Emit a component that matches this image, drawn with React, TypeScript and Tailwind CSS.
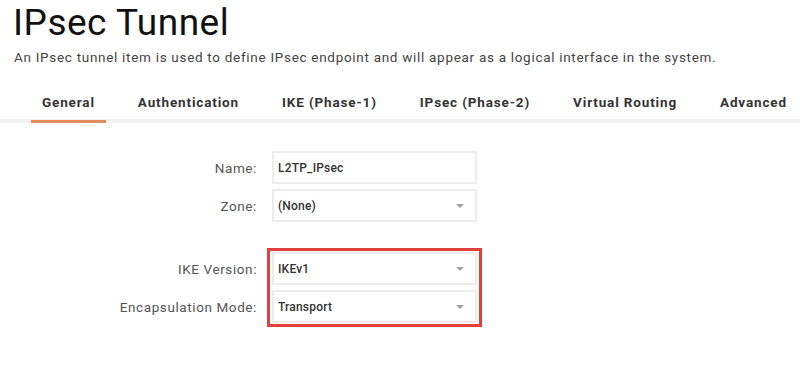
import * as React from "react";

const Caret = () => (
  <svg className="w-[8px] h-[4px]" viewBox="0 0 8 4" fill="#a3a3a3">
    <path d="M0 0h8L4 4z" />
  </svg>
);

const tabs = [
  "General",
  "Authentication",
  "IKE (Phase-1)",
  "IPsec (Phase-2)",
  "Virtual Routing",
  "Advanced",
];

const Box: React.FC<{ value: string; select?: boolean }> = ({ value, select }) => (
  <div className="h-[33px] w-[205px] border-2 border-[#ececec] bg-white flex items-center justify-between pl-[4px] pr-[11px] text-[12px] font-medium tracking-[0.2px] text-[#333]">
    <span>{value}</span>
    {select && <Caret />}
  </div>
);

const Label: React.FC<{ text: string }> = ({ text }) => (
  <div className="h-[33px] flex items-center justify-end pr-[10px] text-[13.5px] tracking-[0.6px] text-[#555]">
    {text}
  </div>
);

const App: React.FC = () => {
  return (
    <div
      className="w-[800px] h-[378px] bg-white overflow-hidden"
      style={{ fontFamily: "Roboto, 'Liberation Sans', sans-serif" }}
    >
      <h1 className="pl-[13px] pt-[1px] text-[37px] leading-[44px] tracking-[0.5px] text-[#111]">IPsec Tunnel</h1>
      <p className="pl-[14px] mt-[4px] text-[13.5px] leading-[16px] tracking-[0.7px] text-[#444]">
        An IPsec tunnel item is used to define IPsec endpoint and will appear as a logical interface in the system.
      </p>
      <div className="mt-[27px] border-b-[4px] border-[#f2f2f2] flex pl-[31px] gap-[21px]">
        {tabs.map((t, i) => (
          <div
            key={t}
            className={`shrink-0 whitespace-nowrap px-[11px] pb-[8px] text-[13.5px] font-bold tracking-[0.85px] text-[#333] -mb-[4px] border-b-[3px] ${
              i === 0 ? "border-[#e38c5b]" : "border-transparent"
            }`}
          >
            {t}
          </div>
        ))}
      </div>
      <div className="mt-[28px] flex">
        <div className="w-[267px] flex flex-col gap-[5px]">
          <Label text="Name:" />
          <Label text="Zone:" />
        </div>
        <div className="pl-[5px] flex flex-col gap-[5px]">
          <Box value="L2TP_IPsec" />
          <Box value="(None)" select />
        </div>
      </div>
      <div className="mt-[26px] flex">
        <div className="w-[267px] pt-[4px] flex flex-col gap-[5px]">
          <Label text="IKE Version:" />
          <Label text="Encapsulation Mode:" />
        </div>
        <div className="border-[3px] border-[#e2403d] px-[2px] py-[1px] flex flex-col gap-[5px]">
          <Box value="IKEv1" select />
          <Box value="Transport" select />
        </div>
      </div>
    </div>
  );
};

export default App;
